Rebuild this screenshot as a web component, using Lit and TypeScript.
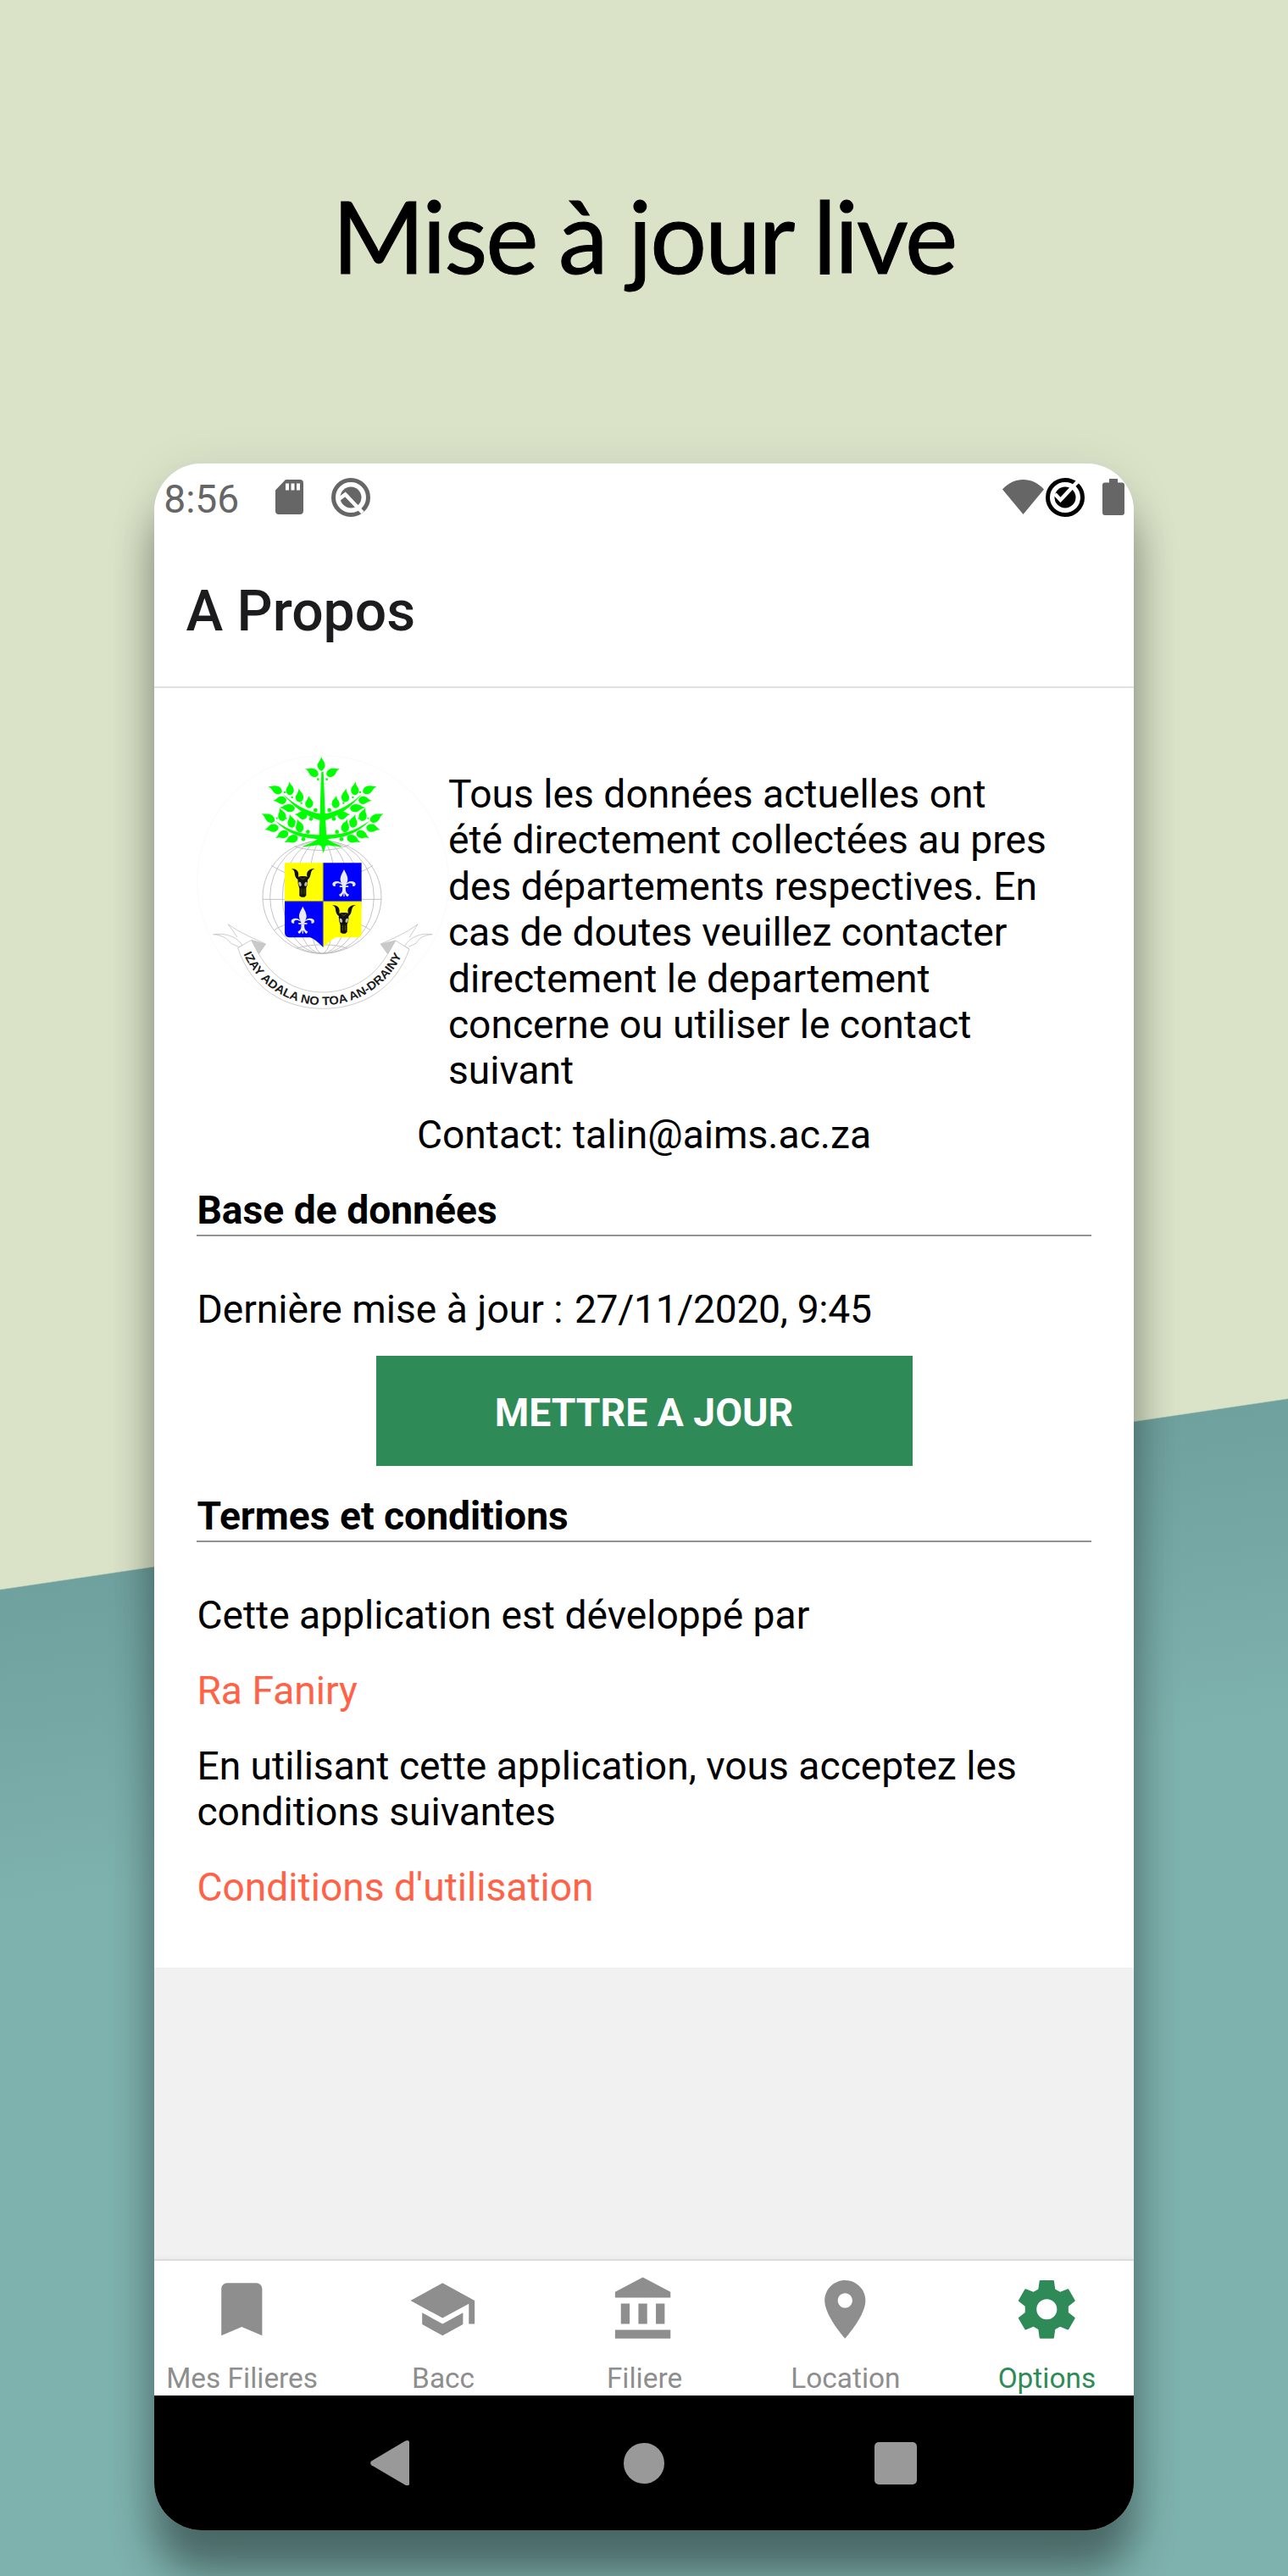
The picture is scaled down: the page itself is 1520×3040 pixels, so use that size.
import { LitElement, html, svg, css } from "lit";
import { customElement, property } from "lit/decorators.js";
import { classMap } from "lit/directives/class-map.js";

type Leaf = [number, number, number, number];

// Leaves of the left half of the tree: base x, base y, tip x, tip y.
const LEAVES: Leaf[] = [
  [469, 104, 422, 81],
  [340, 164, 291, 143],
  [370, 175, 366, 127],
  [404, 200, 400, 151],
  [438, 221, 434, 176],
  [356, 192, 308, 195],
  [386, 222, 331, 219],
  [430, 249, 384, 243],
  [314, 267, 267, 240],
  [346, 266, 331, 219],
  [378, 290, 367, 242],
  [408, 306, 394, 259],
  [328, 288, 277, 298],
  [362, 306, 317, 327],
  [396, 322, 348, 343],
];

const BERRIES: [number, number, number][] = [
  [459, 228, 7], [443, 259, 7], [432, 305, 7], [416, 331, 7],
  [468, 119, 4], [350, 165, 3.5], [376, 183, 3.5], [409, 203, 3.5],
  [322, 257, 3], [355, 257, 3], [386, 268, 3],
];

const leaf = ([bx, by, tx, ty]: Leaf) => {
  const len = Math.hypot(tx - bx, ty - by);
  const deg = (Math.atan2(ty - by, tx - bx) * 180) / Math.PI;
  return svg`<path transform="translate(${bx} ${by}) rotate(${deg}) scale(${len / 50} 1.22)"
    d="M0 0C3 -13 20 -15 32 -6C38 -2 44 -1 50 0C44 1 38 4 32 8C20 14 4 12 0 0Z"/>`;
};

@customElement("university-crest")
export class UniversityCrest extends LitElement {
  static styles = css`
    :host { display: block; }
    svg { display: block; width: 100%; height: 100%; overflow: visible; }
    .motto { font: 700 42px "Liberation Sans", sans-serif; fill: #1c1c1c; }
  `;

  private half() {
    return svg`
      ${LEAVES.map(leaf)}
      ${BERRIES.map(([x, y, r]) => svg`<circle cx=${x} cy=${y} r=${r}/>`)}
      <path d="M340 168C380 205 425 234 484 243L484 266C430 256 383 217 340 168Z"/>
      <path d="M314 264C360 296 400 317 484 316L484 330C400 332 353 303 314 264Z"/>
      <path d="M472 322C462 340 435 348 412 357C440 357 462 352 476 350L484 362V320Z"/>`;
  }

  private bull() {
    return svg`
      <path d="M-41 -50C-20 -52 -12 -38 -16 -22L-6 -24H8L16 -22C10 -38 22 -52 43 -51C28 -46 30 -36 26 -24C22 -14 17 -12 17 -4C18 6 14 10 12 18V44L6 50H-5L-12 46V20C-14 8 -18 6 -17 -4C-18 -14 -26 -18 -28 -28C-29 -40 -30 -46 -41 -50Z"/>
      <path d="M-28 -18L-17 -12L-18 -7ZM30 -18L17 -12L19 -7Z" fill="#ddd"/>
      <ellipse cx="-10" cy="4" rx="5" ry="8" fill="#bbb" transform="rotate(-18 -10 4)"/>
      <ellipse cx="11" cy="4" rx="5" ry="8" fill="#bbb" transform="rotate(18 11 4)"/>
      <path d="M-4 20V40M5 20V40M-8 -20L0 -12L9 -20" stroke="#77720a" stroke-width="2" fill="none"/>`;
  }

  private lily() {
    return svg`
      <path d="M0 -50C8 -34 14 -24 13 -12C12 -4 6 2 5 12H-5C-6 2 -12 -4 -13 -12C-14 -24 -8 -34 0 -50Z"/>
      <path d="M-5 6C-14 -2 -24 -4 -30 2C-32 6 -28 10 -32 10C-40 12 -44 2 -38 -4C-26 -12 -12 -8 -3 6M5 6C14 -2 24 -4 30 2C32 6 28 10 32 10C40 12 44 2 38 -4C26 -12 12 -8 3 6"/>
      <rect x="-16" y="8" width="32" height="5" rx="2"/>
      <path d="M-6 13C-4 26 -8 36 -17 38C-18 46 -10 49 -7 42L-2 34V46H2V34L7 42C10 49 18 46 17 38C8 36 4 26 6 13Z"/>`;
  }

  render() {
    return html`<svg viewBox="38 30 870 930" fill="none">
      <circle cx="485" cy="480" r="445" stroke="#f6f6f6" stroke-width="2"/>
      <g stroke="#bcbcbc" stroke-width="2.700">
        <ellipse cx="482" cy="536" rx="210" ry="200"/>
        <ellipse cx="482" cy="536" rx="184" ry="200"/>
        <ellipse cx="482" cy="536" rx="140" ry="200"/>
        <ellipse cx="482" cy="536" rx="98" ry="200"/>
        <ellipse cx="482" cy="536" rx="48" ry="200"/>
        <path d="M272 544H693M303 424C340 446 350 450 380 456M662 424C630 444 610 450 590 456M314 652C340 636 360 630 390 624M652 652C630 636 610 630 590 624M385 356C440 376 525 376 580 350M392 718C440 700 530 700 572 718"/>
      </g>
      <g fill="#00ff00">
        ${this.half()}
        <g transform="translate(967 0) scale(-1 1)">${this.half()}</g>
        <path d="M480 90C464 80 462 66 472 56L480 40C484 52 492 58 493 70C492 80 486 86 480 90Z"/>
        <path d="M480 92H487L490 160L493 240L498 320L504 350L494 356L487 381L480 356L468 350L472 320L475 240L477 160Z"/>
      </g>
      <path d="M486 415H622V551H486Z" fill="#00f"/>
      <path d="M350 415H486V551H350Z" fill="#ff0"/>
      <path d="M350 551H486V713C470 700 460 686 440 679H366Q350 676 350 662Z" fill="#00f"/>
      <path d="M486 551H622V665Q620 679 606 679H530C512 690 500 702 486 713Z" fill="#ff0"/>
      <path d="M486 415V713M350 551H622" stroke="#77775a" stroke-width="3"/>
      <g fill="#111" transform="translate(414 486)">${this.bull()}</g>
      <g fill="#111" transform="translate(559 615)">${this.bull()}</g>
      <g fill="#e9e9f2" transform="translate(560 488)">${this.lily()}</g>
      <g fill="#e9e9f2" transform="translate(414 619)">${this.lily()}</g>
      <g stroke="#c6c6c6" stroke-width="2.700" stroke-linejoin="round">
        <path d="M184 716L232 688L258 737C310 830 400 873 486 873C572 873 662 830 715 737L742 690L791 720C742 862 620 931 486 931C352 931 232 862 184 716Z"/>
        <path d="M184 716L200 706C180 676 140 662 97 668C125 670 145 680 160 700L186 712M182 678L150 632C190 662 240 682 282 702L258 737"/>
        <path d="M791 720L775 709C795 676 832 662 873 668C845 670 825 680 815 700L789 712M792 678L821 632C782 662 735 682 690 702L715 737"/>
        <path d="M232 688L282 702L258 737Z" fill="#c9c9c9"/>
        <path d="M742 690L690 702L715 737Z" fill="#c9c9c9"/>
      </g>
      <path id="motto" d="M204 737A309 309 0 0 0 767 737"/>
      <text class="motto"><textPath href="#motto" textLength="702" lengthAdjust="spacingAndGlyphs">IZAY ADALA NO TOA AN-DRAINY</textPath></text>
    </svg>`;
  }
}

const TAB_ICONS = {
  bookmark: "M17 3H7c-1.100 0-1.990.9-1.990 2L5 21l7-3 7 3V5c0-1.100-.9-2-2-2z",
  school: "M5 13.180v4L12 21l7-3.820v-4L12 17l-7-3.820zM12 3L1 9l11 6 9-4.910V17h2V9L12 3z",
  bank: "M11.500 1L2 6v2h19V6l-9.500-5zM16 10v7h3v-7h-3zM2 22h19v-3H2v3zM10 10v7h3v-7h-3zM4 10v7h3v-7H4z",
  place: "M12 2C8.130 2 5 5.130 5 9c0 5.250 7 13 7 13s7-7.750 7-13c0-3.870-3.130-7-7-7zm0 9.500c-1.380 0-2.500-1.120-2.500-2.500s1.120-2.500 2.500-2.500 2.500 1.120 2.500 2.500-1.120 2.500-2.500 2.500z",
  settings: "M9.800 2H14.200Q14.450 2 14.500 2.250L14.900 5.080L16.580 6.050L19.200 5L19.500 5.100L21.700 8.900L21.650 9.200L19.430 10.950V13.050L21.650 14.800L21.700 15.100L19.500 18.900L19.200 19L16.580 17.950L14.900 18.920L14.500 21.750Q14.450 22 14.200 22H9.800Q9.550 22 9.500 21.750L9.100 18.920L7.420 17.950L4.800 19L4.500 18.900L2.300 15.100L2.350 14.800L4.570 13.050V10.950L2.350 9.200L2.300 8.900L4.500 5.100L4.800 5L7.420 6.050L9.100 5.080L9.500 2.250Q9.550 2 9.800 2ZM12 15.500a3.500 3.500 0 1 0 0-7a3.500 3.500 0 1 0 0 7z",
};

const TABS: { label: string; icon: keyof typeof TAB_ICONS }[] = [
  { label: "Mes Filieres", icon: "bookmark" },
  { label: "Bacc", icon: "school" },
  { label: "Filiere", icon: "bank" },
  { label: "Location", icon: "place" },
  { label: "Options", icon: "settings" },
];

@customElement("tab-bar")
export class TabBar extends LitElement {
  @property() active = "";
  static styles = css`
    :host { display: block; box-sizing: border-box; height: 161.500px; background: #fff; border-top: 2px solid #dcdcdc; box-shadow: 0 -2px 5px rgba(0,0,0,.03); }
    .tabs { display: grid; grid-template-columns: repeat(5, 1fr); margin: 0 -16px; padding-top: 16px; }
    .tab { display: flex; flex-direction: column; align-items: center; gap: 21px; color: #8e8e8f; font-size: 33.400px; line-height: 40px; white-space: nowrap; }
    .tab span { padding-left: 1px; }
    .tab.active { color: #2e8b57; }
    svg { width: 82.600px; height: 82.600px; fill: currentColor; fill-rule: evenodd; }
  `;
  render() {
    return html`<div class="tabs">${TABS.map(
      (t) => html`<div class=${classMap({ tab: true, active: t.label === this.active })}>
        <svg viewBox="0 0 24 24"><path d=${TAB_ICONS[t.icon]}/></svg>
        <span>${t.label}</span>
      </div>`
    )}</div>`;
  }
}

@customElement("status-bar")
export class StatusBar extends LitElement {
  static styles = css`
    :host { display: flex; align-items: center; box-sizing: border-box; height: 84px; padding: 0 11px 0 10.800px; color: #666; font-size: 46.200px; line-height: 54.400px; }
    .time { width: 131.600px; }
    .icons { display: flex; align-items: center; margin-bottom: 5px; }
    .left { gap: 33px; }
    .right { margin-left: auto; }
    svg { display: block; }
    .ring { width: 46px; height: 46px; }
    .sd { width: 33px; height: 41px; }
    .wifi { width: 49px; height: 41px; margin-right: 1.500px; }
    .battery { width: 26px; height: 43px; margin-left: 21px; }
  `;
  render() {
    return html`
      <span class="time">8:56</span>
      <div class="icons left">
        <svg class="sd" viewBox="0 0 33 41"><path fill="#666" fill-rule="evenodd" d="M12 0H29Q33 0 33 4V37Q33 41 29 41H4Q0 41 0 37V12.500ZM12 4.500V12.500H16V4.500ZM18.500 4.500V12.500H22.500V4.500ZM25 4.500V12.500H29V4.500Z"/></svg>
        <svg class="ring" viewBox="0 0 46 46" fill="none">
          <circle cx="23" cy="23" r="20.500" stroke="#666" stroke-width="5"/>
          <circle cx="23" cy="23" r="12.500" fill="#666"/>
          <path d="M9 25L16.500 19.500L37 41" stroke="#fff" stroke-width="4.500"/>
        </svg>
      </div>
      <div class="icons right">
        <svg class="wifi" viewBox="0 0 49 41"><path fill="#666" d="M24.500 41L0 11.500C14 -3.700 35 -3.700 49 11.500Z"/></svg>
        <svg class="ring" viewBox="0 0 46 46" fill="none">
          <circle cx="23" cy="23" r="20.500" stroke="#000" stroke-width="5"/>
          <circle cx="23" cy="23" r="12.500" fill="#000"/>
          <path d="M11 19L17.500 26L38.500 3.500" stroke="#fff" stroke-width="4.500"/>
        </svg>
        <svg class="battery" viewBox="0 0 26 43"><path fill="#666" d="M8 0H18V4.500H23Q26 4.500 26 7.500V40Q26 43 23 43H3Q0 43 0 40V7.500Q0 4.500 3 4.500H8Z"/></svg>
      </div>`;
  }
}

@customElement("app-root")
export class AppRoot extends LitElement {
  static styles = css`
    :host {
      display: block; box-sizing: border-box; width: 1520px; height: 3040px; overflow: hidden;
      padding: 218px 182.400px 0; font-family: Roboto, sans-serif; color: #000;
      background: linear-gradient(171.570deg, #dae3c8 1855px, #6fa19e 1856.500px, #7eb2ae 2230px);
    }
    .headline { margin: 0; height: 329px; font: 400 118px/120px Lato, sans-serif; letter-spacing: -2.300px; word-spacing: -2px; -webkit-text-stroke: 1px #000; text-align: center; white-space: nowrap; }
    .phone {
      display: flex; flex-direction: column; height: 2439px; overflow: hidden; border-radius: 56px; background: #f1f1f1;
      box-shadow: 0 50px 50px rgba(0,0,0,.4), 0 4px 60px rgba(0,0,0,.07);
    }
    .top { background: #fff; }
    .header { box-sizing: border-box; height: 181px; padding: 52.500px 37px 0; border-bottom: 2px solid #e0e0e1; }
    .header h2 { margin: 0; font-size: 66px; line-height: 76px; font-weight: 500; color: #1c1c1e; }
    .content { box-sizing: border-box; height: 1510px; padding: 78px 50px 0; background: #fff; font-size: 46.200px; line-height: 54.400px; }
    .intro { display: flex; gap: 6.500px; height: 400.800px; }
    university-crest { flex: none; width: 290px; height: 310px; }
    .note { margin: 0; padding-top: 20px; white-space: nowrap; }
    .contact { margin: 21.200px 0 34.900px; text-align: center; }
    .section { margin: 0; padding-bottom: 1.400px; border-bottom: 2px solid #929292; font-size: inherit; font-weight: 700; }
    .row { margin: 0 0 34.600px; }
    .row.first { margin-top: 59.200px; }
    .row.update { margin-bottom: 27.600px; }
    .date { margin-left: 2px; letter-spacing: -.3px; }
    .link { color: #ff6347; }
    .button { display: flex; align-items: center; justify-content: center; box-sizing: border-box; width: 633px; height: 129.400px; margin: 0 auto 32.300px; padding: 5px 0 0; border: 0; background: #2e8b57; color: #fff; font: 700 46.300px/54.400px Roboto, sans-serif; }
    tab-bar { flex: none; margin-top: auto; }
    .keys { flex: none; display: flex; align-items: center; box-sizing: border-box; height: 158.700px; padding-left: 254.400px; background: #000; }
    .keys svg { display: block; fill: #999; }
    .back { width: 46.500px; height: 53.400px; }
    .home { width: 48px; height: 48px; margin: 0 248px 0 252.700px; }
    .recent { width: 50px; height: 50px; }
  `;

  render() {
    return html`
      <h1 class="headline">Mise à jour live</h1>
      <main class="phone">
        <div class="top">
          <status-bar></status-bar>
          <div class="header"><h2>A Propos</h2></div>
        </div>
        <div class="content">
          <div class="intro">
            <university-crest></university-crest>
            <p class="note">Tous les données actuelles ont<br>été directement collectées au pres<br>des départements respectives. En<br>cas de doutes veuillez contacter<br>directement le departement<br>concerne ou utiliser le contact<br>suivant</p>
          </div>
          <p class="contact">Contact: talin@aims.ac.za</p>
          <h3 class="section">Base de données</h3>
          <p class="row first update">Dernière mise à jour : <span class="date">27/11/2020, 9:45</span></p>
          <button class="button">METTRE A JOUR</button>
          <h3 class="section">Termes et conditions</h3>
          <p class="row first">Cette application est développé par</p>
          <p class="row link">Ra Faniry</p>
          <p class="row">En utilisant cette application, vous acceptez les<br>conditions suivantes</p>
          <p class="row link">Conditions d'utilisation</p>
        </div>
        <tab-bar active="Options"></tab-bar>
        <div class="keys">
          <svg class="back" viewBox="0 0 46.500 53.400"><path d="M1.500 24.200L41 .8Q46.500 -1.500 46.500 4V49.400Q46.500 54.900 41 52.600L1.500 29.200Q-1.200 26.700 1.500 24.200Z"/></svg>
          <svg class="home" viewBox="0 0 48 48"><circle cx="24" cy="24" r="24"/></svg>
          <svg class="recent" viewBox="0 0 50 50"><rect width="50" height="50" rx="5"/></svg>
        </div>
      </main>`;
  }
}
